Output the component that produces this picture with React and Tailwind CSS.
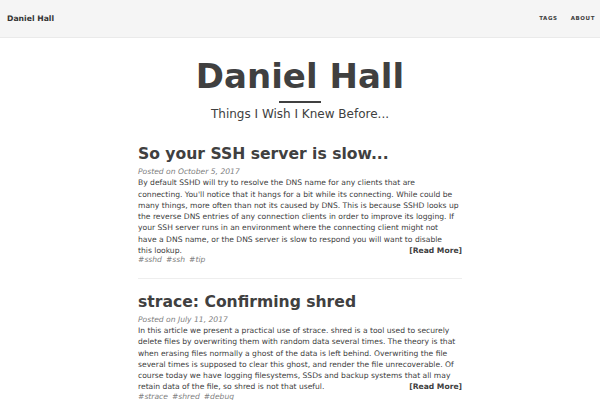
const POSTS = [
  {
    title: "So your SSH server is slow...",
    date: "October 5, 2017",
    lines: [
      "By default SSHD will try to resolve the DNS name for any clients that are",
      "connecting. You'll notice that it hangs for a bit while its connecting. While could be",
      "many things, more often than not its caused by DNS. This is because SSHD looks up",
      "the reverse DNS entries of any connection clients in order to improve its logging. If",
      "your SSH server runs in an environment where the connecting client might not",
      "have a DNS name, or the DNS server is slow to respond you will want to disable",
      "this lookup.",
    ],
    tags: ["sshd", "ssh", "tip"],
  },
  {
    title: "strace: Confirming shred",
    date: "July 11, 2017",
    lines: [
      "In this article we present a practical use of strace. shred is a tool used to securely",
      "delete files by overwriting them with random data several times. The theory is that",
      "when erasing files normally a ghost of the data is left behind. Overwriting the file",
      "several times is supposed to clear this ghost, and render the file unrecoverable. Of",
      "course today we have logging filesystems, SSDs and backup systems that all may",
      "retain data of the file, so shred is not that useful.",
    ],
    tags: ["strace", "shred", "debug"],
  },
];

export default function App() {
  return (
    <div className="min-h-screen bg-white text-[#404040] font-['DejaVu_Sans',sans-serif]">
      <nav className="h-[38px] bg-[#f5f5f5] border-b border-[#eaeaea] flex items-center justify-between pl-[7px] pr-[5px]">
        <span className="text-[7.7px] font-bold text-[#333]">Daniel Hall</span>
        <div className="flex gap-[13px] text-[5.5px] font-bold tracking-[0.6px] text-[#404040]">
          <span>TAGS</span>
          <span>ABOUT</span>
        </div>
      </nav>

      <header className="flex flex-col items-center pt-[14px]">
        <h1 className="text-[34px] font-bold leading-[48px] text-[#404040]">Daniel Hall</h1>
        <div className="w-[42px] h-[2px] bg-[#404040] mt-[1px]"></div>
        <div className="text-[12px] leading-[16px] mt-[3px] text-[#404040]">Things I Wish I Knew Before...</div>
      </header>

      <main className="w-[324px] mx-auto mt-[22px]">
        {POSTS.map((p, i) => (
          <article key={p.title} className={i > 0 ? "border-t border-[#eee] mt-[12px] pt-[13px]" : ""}>
            <h2 className="text-[15.6px] font-bold leading-[20px] text-[#404040]">{p.title}</h2>
            <div className="text-[7.6px] italic text-[#808080] leading-[11.3px] mt-[2px]">Posted on {p.date}</div>
            <div className="text-[7.6px] leading-[11.3px] text-[#404040]">
              {p.lines.map((l, j) => (
                <div key={j} className="whitespace-nowrap flex justify-between">
                  <span>{l}</span>
                  {j === p.lines.length - 1 && <span className="font-bold">[Read More]</span>}
                </div>
              ))}
            </div>
            <div className="text-[7.6px] italic text-[#808080] leading-[11.3px] -mt-[2px] flex gap-[4px]">
              {p.tags.map(t => (
                <span key={t}>#{t}</span>
              ))}
            </div>
          </article>
        ))}
      </main>
    </div>
  );
}
